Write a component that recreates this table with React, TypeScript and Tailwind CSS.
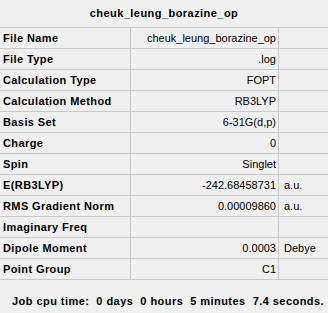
import React from 'react';

const rows: [string, string, string][] = [
  ['File Name', 'cheuk_leung_borazine_op', ''],
  ['File Type', '.log', ''],
  ['Calculation Type', 'FOPT', ''],
  ['Calculation Method', 'RB3LYP', ''],
  ['Basis Set', '6-31G(d,p)', ''],
  ['Charge', '0', ''],
  ['Spin', 'Singlet', ''],
  ['E(RB3LYP)', '-242.68458731', 'a.u.'],
  ['RMS Gradient Norm', '0.00009860', 'a.u.'],
  ['Imaginary Freq', '', ''],
  ['Dipole Moment', '0.0003', 'Debye'],
  ['Point Group', 'C1', ''],
];

export default function App() {
  return (
    <div className="w-[328px] h-[313px] bg-[#f0f0f0] text-black text-[11px] font-['Liberation_Sans',Arial,sans-serif] overflow-hidden">
      <div className="h-[27px] flex items-center justify-center font-bold tracking-[0.45px]">
        cheuk_leung_borazine_op
      </div>

      <div className="grid grid-cols-[131px_148px_49px] border-t border-[#c8c8c8]">
        {rows.map(([label, value, unit]) => (
          <React.Fragment key={label}>
            <div className="h-[21px] flex items-center pl-[3px] font-bold tracking-[0.4px] border-b border-r border-[#c8c8c8] whitespace-nowrap">
              {label}
            </div>
            <div className="h-[21px] flex items-center justify-end pr-[2px] border-b border-r border-[#c8c8c8] whitespace-nowrap">
              {value}
            </div>
            <div className="h-[21px] flex items-center pl-[5px] border-b border-[#c8c8c8] whitespace-nowrap">
              {unit}
            </div>
          </React.Fragment>
        ))}
      </div>

      <div className="pl-[12px] pt-[15px] leading-[13px] font-bold tracking-[0.45px] whitespace-pre">
        {'Job cpu time:  0 days  0 hours  5 minutes  7.4 seconds.'}
      </div>
    </div>
  );
}
